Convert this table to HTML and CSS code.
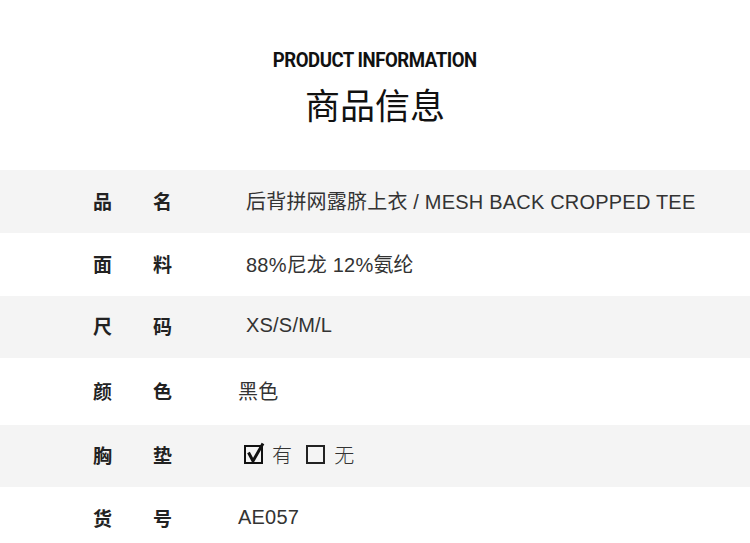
FILE: index.html
```html
<!DOCTYPE html>
<html lang="zh">
<head>
<meta charset="utf-8">
<link rel="stylesheet" href="styles.css">
</head>
<body>
<header class="head">
  <div class="en">PRODUCT INFORMATION</div>
  <div class="cn">商品信息</div>
</header>
<section class="table">
  <div class="row grey"><div class="label"><span>品</span><span>名</span></div><div class="val">后背拼网露脐上衣 / MESH BACK CROPPED TEE</div></div>
  <div class="row"><div class="label"><span>面</span><span>料</span></div><div class="val">88%尼龙 12%氨纶</div></div>
  <div class="row grey r3"><div class="label"><span>尺</span><span>码</span></div><div class="val">XS/S/M/L</div></div>
  <div class="row r4"><div class="label"><span>颜</span><span>色</span></div><div class="val shift">黑色</div></div>
  <div class="row grey r5"><div class="label"><span>胸</span><span>垫</span></div><div class="val checks">
    <span class="box checked"><svg viewBox="0 0 22 22" width="22" height="22"><rect x="1" y="4" width="17" height="17" fill="none" stroke="#111" stroke-width="2"/><path d="M4.5 10.5 L9 19 L19 1.5" fill="none" stroke="#111" stroke-width="3" stroke-linejoin="miter"/></svg></span><span class="opt">有</span>
    <span class="box"><svg viewBox="0 0 22 22" width="22" height="22"><rect x="1" y="4" width="17" height="17" fill="none" stroke="#222" stroke-width="2"/></svg></span><span class="opt">无</span>
  </div></div>
  <div class="row last"><div class="label"><span>货</span><span>号</span></div><div class="val shift">AE057</div></div>
</section>
</body>
</html>
```
FILE: styles.css
```css
html, body { margin: 0; padding: 0; background: #fff; }
body { width: 750px; height: 543px; overflow: hidden; font-family: "Liberation Sans", "Noto Sans CJK SC", sans-serif; color: #333; }
.head { display: flex; flex-direction: column; align-items: center; padding-top: 49px; height: 170px; box-sizing: border-box; }
.en { font-family: Roboto, "Liberation Sans", sans-serif; font-weight: 700; font-size: 20px; line-height: 22px; color: #111; letter-spacing: -0.5px; transform: scaleX(0.93); }
.cn { font-family: "Noto Sans CJK SC", sans-serif; font-weight: 400; font-size: 35px; line-height: 40px; margin-top: 13px; color: #111; }
.table { display: flex; flex-direction: column; }
.row { display: flex; align-items: center; height: 63px; padding-left: 93px; padding-bottom: 3px; box-sizing: border-box; }
.row.grey { background: #f4f4f4; }
.r3 { height: 62px; }
.r4 { height: 67px; }
.r5 { height: 62px; }
.label { display: flex; width: 153px; font-family: "Noto Sans CJK SC", sans-serif; font-weight: 700; font-size: 19px; color: #222; }
.label span:first-child { width: 60px; }
.val { font-family: "Liberation Sans", "Noto Sans CJK SC", sans-serif; font-size: 20px; color: #333; font-weight: 400; letter-spacing: 0.2px; }
.val.shift { margin-left: -8px; }
.checks { display: flex; align-items: center; margin-left: -2px; }
.box { display: flex; width: 22px; height: 22px; margin-top: -4px; }
.opt { margin-left: 6px; margin-right: 14px; font-family: "Noto Sans CJK SC", sans-serif; font-weight: 300; }
```
